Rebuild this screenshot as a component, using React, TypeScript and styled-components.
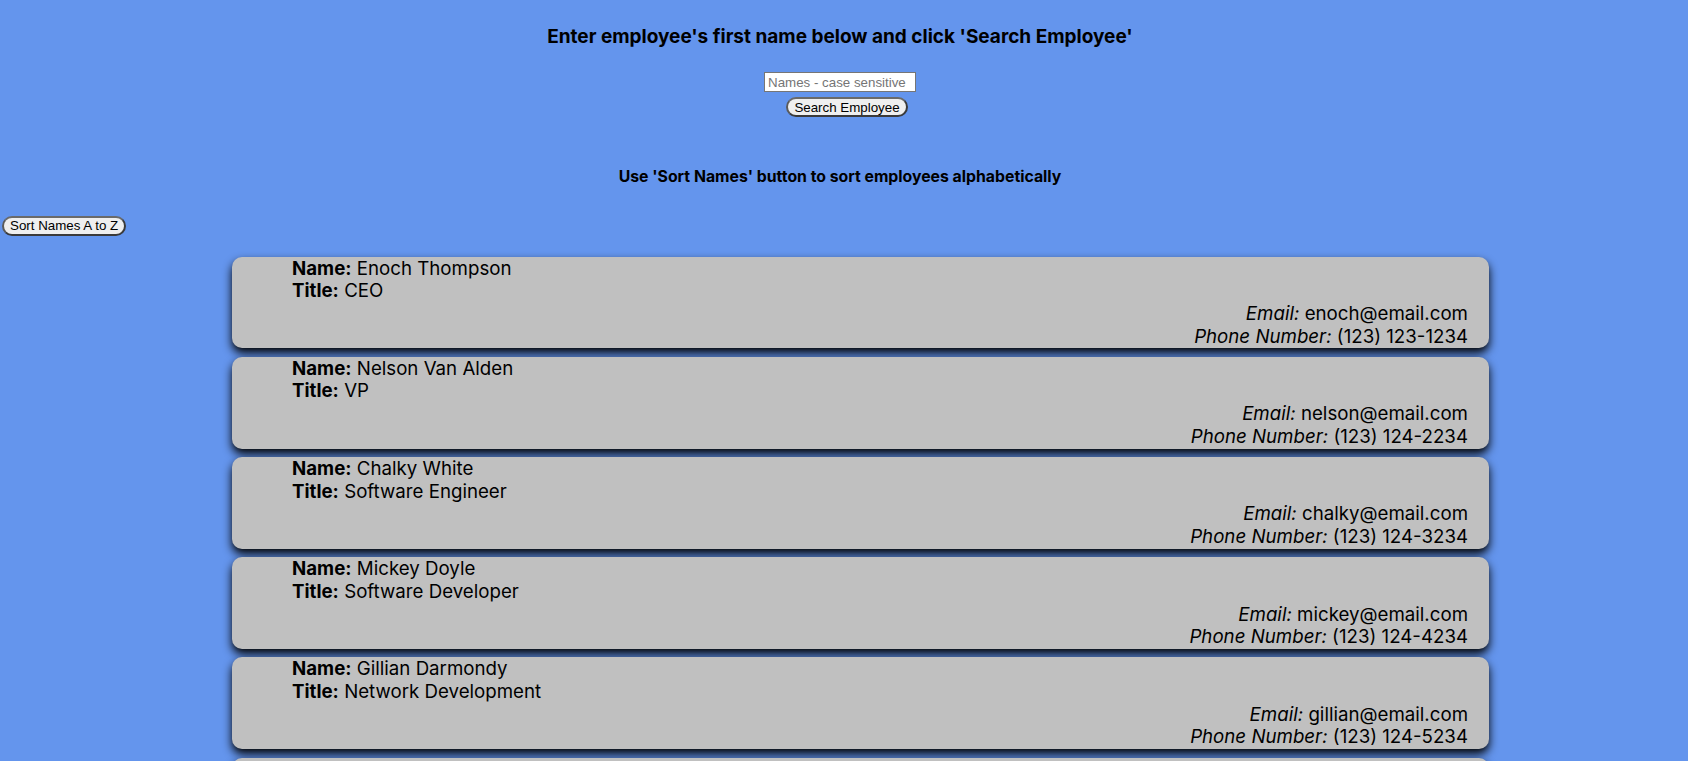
import styled, { createGlobalStyle } from 'styled-components';
import { useState } from 'react';

interface Employee {
    id: number;
    name: string;
    title: string;
    email: string;
    phone: string;
}

const employees: Employee[] = [
    { id: 1, name: 'Enoch Thompson', title: 'CEO', email: 'enoch@email.com', phone: '(123) 123-1234' },
    { id: 2, name: 'Nelson Van Alden', title: 'VP', email: 'nelson@email.com', phone: '(123) 124-2234' },
    { id: 3, name: 'Chalky White', title: 'Software Engineer', email: 'chalky@email.com', phone: '(123) 124-3234' },
    { id: 4, name: 'Mickey Doyle', title: 'Software Developer', email: 'mickey@email.com', phone: '(123) 124-4234' },
    { id: 5, name: 'Gillian Darmondy', title: 'Network Development', email: 'gillian@email.com', phone: '(123) 124-5234' },
    { id: 6, name: 'Margaret Schroeder', title: 'Network Administrator', email: 'margaret@email.com', phone: '(123) 124-6234' },
];

const GlobalStyle = createGlobalStyle`
    body {
        margin: 0;
        background: #6495ed;
        font-family: Inter, 'Noto Sans', sans-serif;
        color: #000;
    }
`;

const Header = styled.div`
    text-align: center;
    padding-right: 8px;
`;

const Title = styled.h3`
    margin: 25px 0 0;
    font-size: 19px;
    font-weight: 700;
`;

const SubTitle = styled.h4`
    margin: 50px 0 0;
    font-size: 15.8px;
    font-weight: 700;
`;

const SearchForm = styled.form`
    display: flex;
    flex-direction: column;
    align-items: center;
    gap: 5px;
    margin-top: 24px;
`;

const Input = styled.input`
    box-sizing: border-box;
    width: 152px;
    height: 20px;
    padding: 1px 3px;
    border: 1px solid #767676;
    font-family: 'Liberation Sans', Arial, sans-serif;
    font-size: 13.33px;
    background: #fff;
    &::placeholder {
        color: #757575;
    }
`;

const Button = styled.button<{ $shift?: number }>`
    box-sizing: border-box;
    height: 20px;
    padding: 0 6px;
    margin-left: ${(p) => p.$shift || 0}px;
    border: 2px solid #3a3a3a;
    border-top-color: #6a6a6a;
    border-left-color: #5a5a5a;
    border-radius: 10px;
    background: #efefef;
    font-family: 'Liberation Sans', Arial, sans-serif;
    font-size: 13.33px;
    color: #000;
`;

const SortBar = styled.div`
    padding: 0 2px;
    margin-top: 28px;
`;

const List = styled.div`
    margin-top: 21px;
    display: flex;
    flex-direction: column;
    gap: 8.4px;
`;

const Card = styled.div`
    box-sizing: border-box;
    width: 1257px;
    margin-left: 232px;
    padding: 1px 21px 0 60px;
    background: #c0c0c0;
    border-radius: 10px;
    box-shadow: 0 5px 10px #000;
    font-size: 18.7px;
    line-height: 22.7px;
`;

const Line = styled.div<{ $right?: boolean }>`
    text-align: ${(p) => (p.$right ? 'right' : 'left')};
`;

const Label = styled.span<{ $italic?: boolean }>`
    font-weight: ${(p) => (p.$italic ? 400 : 700)};
    font-style: ${(p) => (p.$italic ? 'italic' : 'normal')};
`;

const App = () => {
    const [search, setSearch] = useState('');
    const [list, setList] = useState<Employee[]>(employees);

    const handleSearch = (e: React.FormEvent) => {
        e.preventDefault();
        setList(search ? employees.filter((item) => item.name.split(' ')[0] === search) : employees);
    };

    const handleSort = () => {
        setList([...list].sort((a, b) => a.name.localeCompare(b.name)));
    };

    return (
        <>
            <GlobalStyle />
            <Header>
                <Title>Enter employee's first name below and click 'Search Employee'</Title>
                <SearchForm onSubmit={handleSearch}>
                    <Input
                        placeholder="Names - case sensitive"
                        value={search}
                        onChange={(e) => setSearch(e.target.value)}
                    />
                    <Button type="submit" $shift={14}>
                        Search Employee
                    </Button>
                </SearchForm>
                <SubTitle>Use 'Sort Names' button to sort employees alphabetically</SubTitle>
            </Header>
            <SortBar>
                <Button onClick={handleSort}>Sort Names A to Z</Button>
            </SortBar>
            <List>
                {list.map((item) => (
                    <Card key={item.id}>
                        <Line>
                            <Label>Name:</Label> {item.name}
                        </Line>
                        <Line>
                            <Label>Title:</Label> {item.title}
                        </Line>
                        <Line $right>
                            <Label $italic>Email:</Label> {item.email}
                        </Line>
                        <Line $right>
                            <Label $italic>Phone Number:</Label> {item.phone}
                        </Line>
                    </Card>
                ))}
            </List>
        </>
    );
};

export default App;
